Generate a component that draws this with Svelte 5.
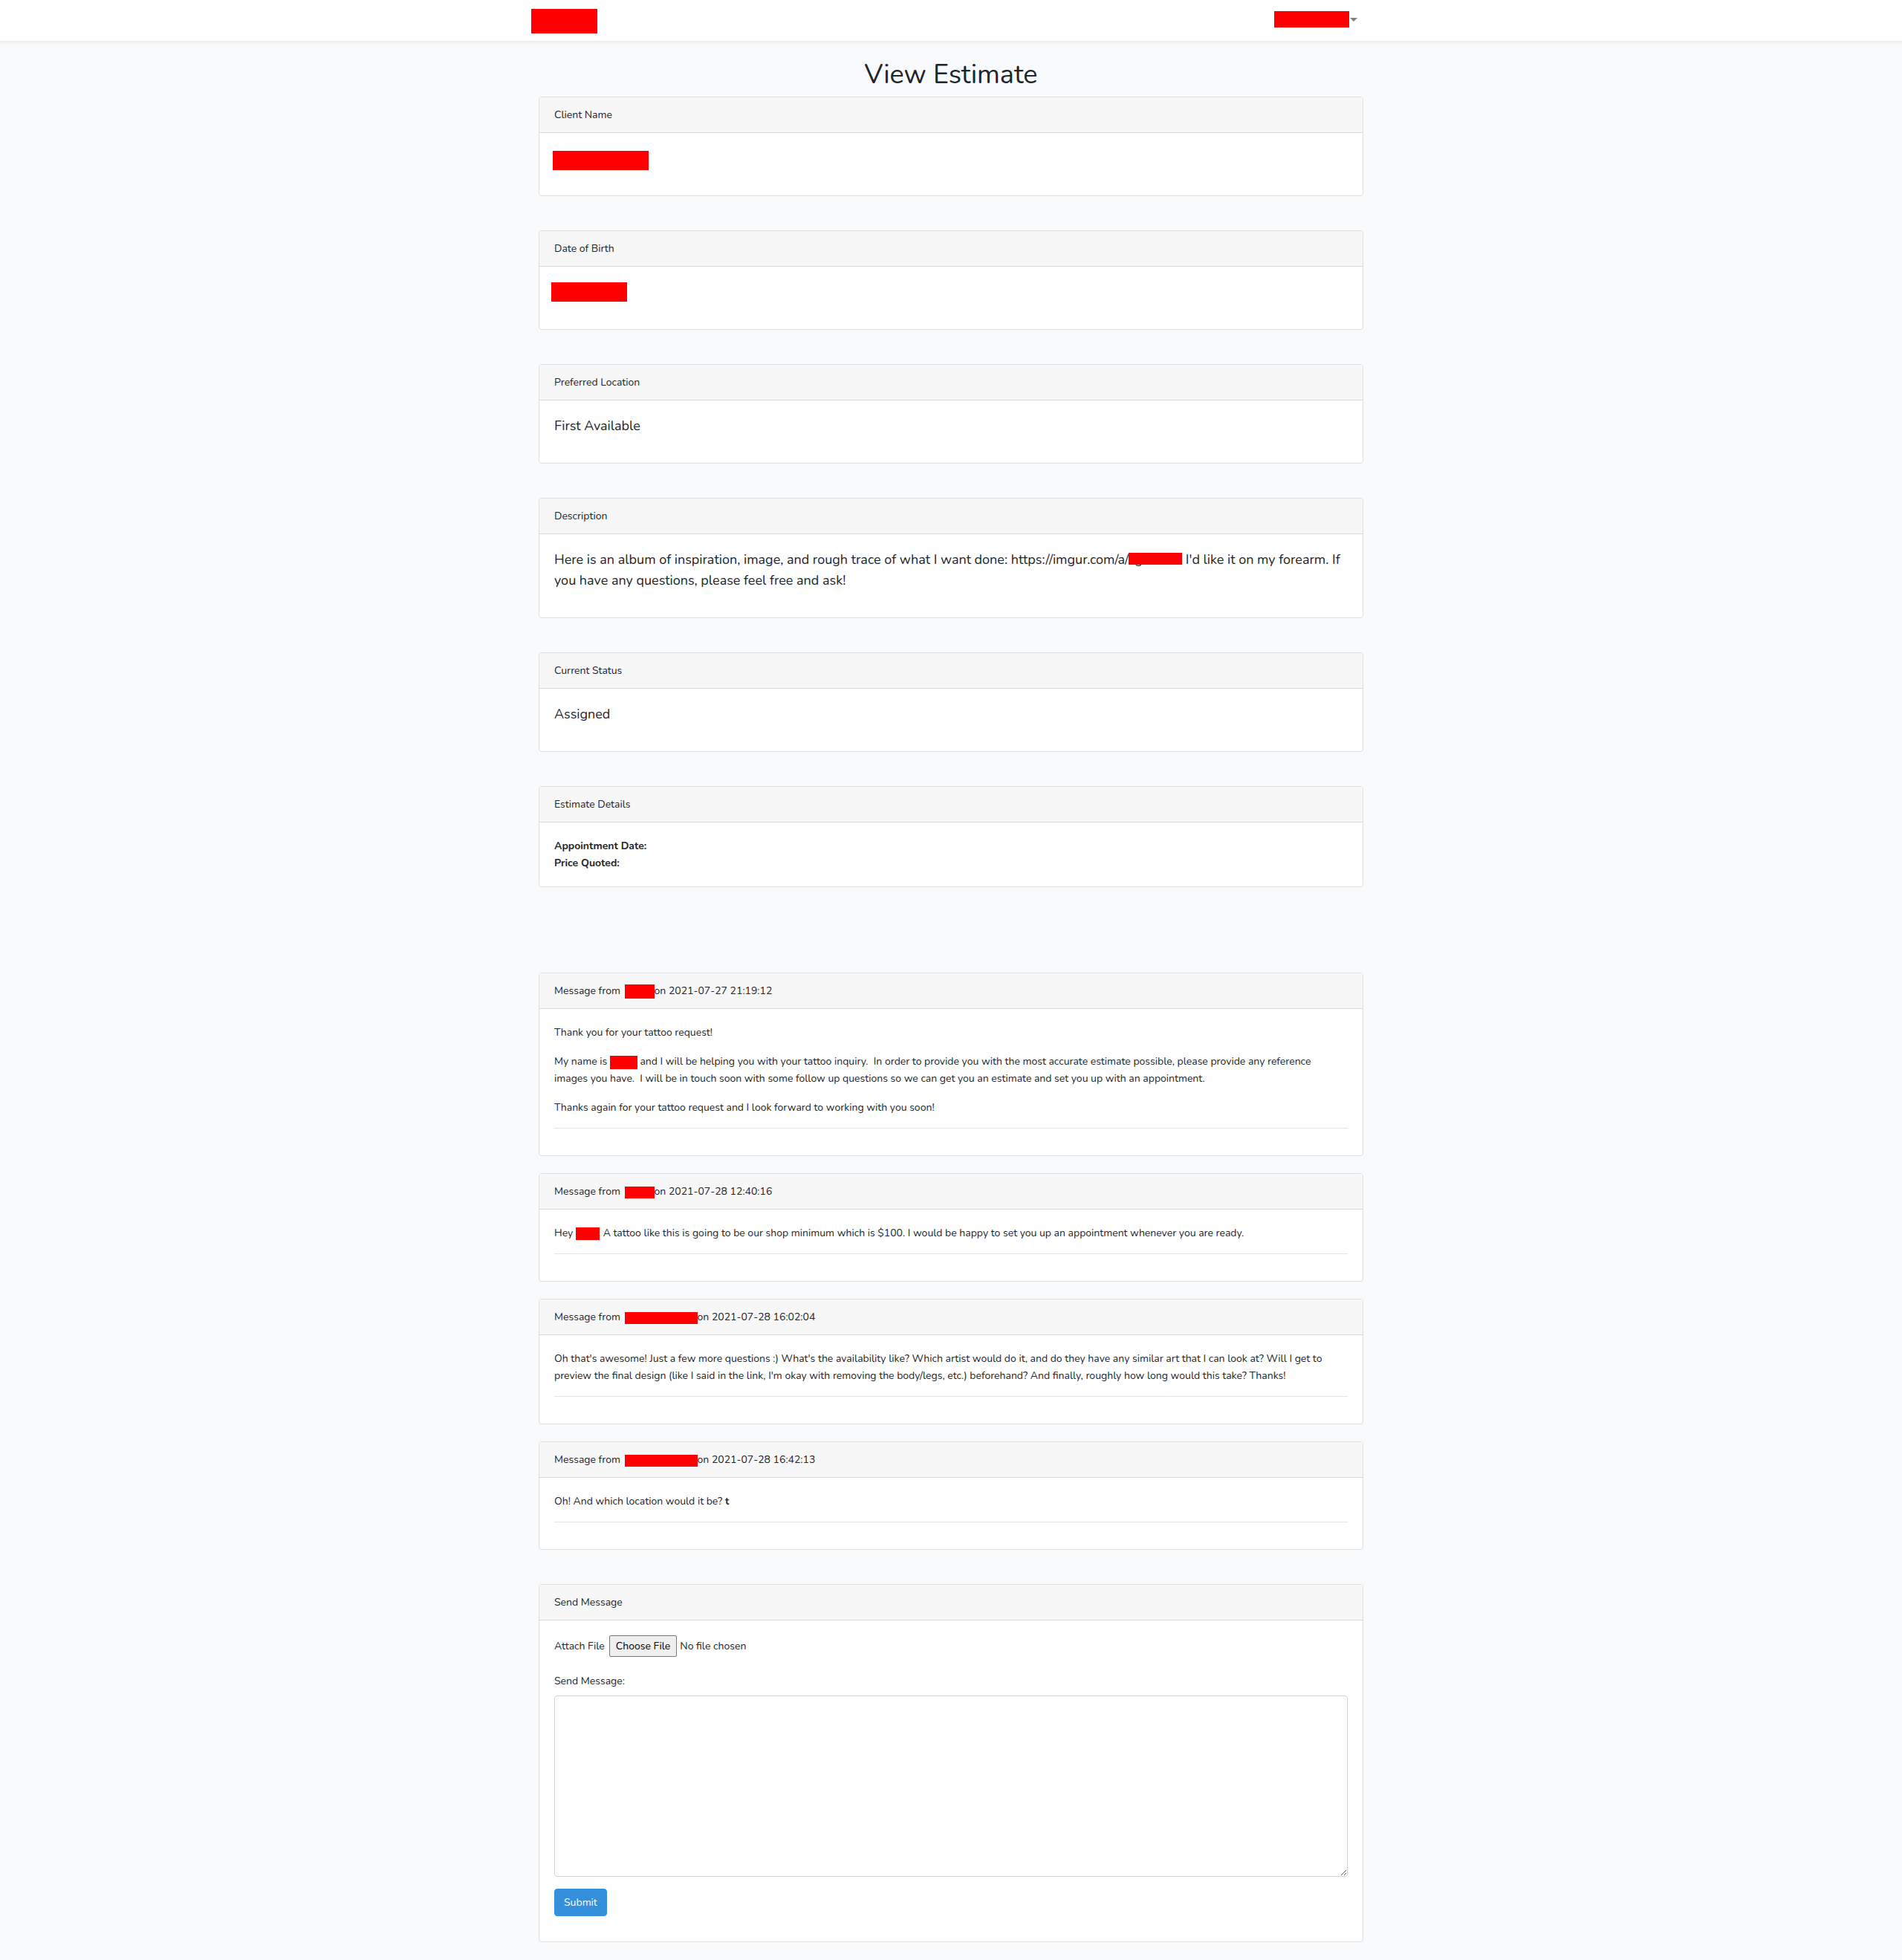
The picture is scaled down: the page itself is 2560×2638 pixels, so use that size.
<script>
  const messages = [
    { size: 'short tall', date: '2021-07-27 21:19:12', body: first },
    { size: 'short', date: '2021-07-28 12:40:16', body: second },
    { size: 'long', date: '2021-07-28 16:02:04', body: third },
    { size: 'long', date: '2021-07-28 16:42:13', body: fourth },
  ];
</script>

{#snippet first()}
  <p>Thank you for your tattoo request!</p>
  <p>
    My name is <span class="redacted name"></span> and I will be helping you with your tattoo inquiry.&nbsp; In order
    to provide you with the most accurate estimate possible, please provide any reference images you have.&nbsp; I will
    be in touch soon with some follow up questions so we can get you an estimate and set you up with an appointment.
  </p>
  <p>Thanks again for your tattoo request and I look forward to working with you soon!</p>
{/snippet}

{#snippet second()}
  <p>
    Hey <span class="redacted client"></span>. A tattoo like this is going to be our shop minimum which is $100. I
    would be happy to set you up an appointment whenever you are ready.
  </p>
{/snippet}

{#snippet third()}
  <p>
    Oh that's awesome! Just a few more questions :) What's the availability like? Which artist would do it, and do they
    have any similar art that I can look at? Will I get to preview the final design (like I said in the link, I'm okay
    with removing the body/legs, etc.) beforehand? And finally, roughly how long would this take? Thanks!
  </p>
{/snippet}

{#snippet fourth()}
  <p>Oh! And which location would it be? <b>t</b></p>
{/snippet}

{#snippet clientName()}
  <p class="hidden-value"><span class="redacted full-name"></span></p>
{/snippet}

{#snippet birthDate()}
  <p class="hidden-value"><span class="redacted birth"></span></p>
{/snippet}

{#snippet location()}
  <p>First Available</p>
{/snippet}

{#snippet description()}
  <p>
    Here is an album of inspiration, image, and rough trace of what I want done: https://imgur.com/a/<span
      class="album">g</span
    > I'd like it on my forearm. If you have any questions, please feel free and ask!
  </p>
{/snippet}

{#snippet status()}
  <p>Assigned</p>
{/snippet}

{#snippet field(title, body)}
  <section class="card">
    <h2 class="card-header">{title}</h2>
    <div class="card-body lead">{@render body()}</div>
  </section>
{/snippet}

<nav class="navbar">
  <div class="container nav-row">
    <a class="brand" href="/" aria-label="Home"></a>
    <button class="user" type="button" aria-label="Account menu">
      <span class="user-name"></span>
      <span class="caret"></span>
    </button>
  </div>
</nav>

<main class="container page">
  <h1>View Estimate</h1>

  <div class="fields">
    {@render field('Client Name', clientName)}
    {@render field('Date of Birth', birthDate)}
    {@render field('Preferred Location', location)}
    {@render field('Description', description)}
    {@render field('Current Status', status)}
    <section class="card">
      <h2 class="card-header">Estimate Details</h2>
      <div class="card-body">
        <div><b>Appointment Date:</b></div>
        <div><b>Price Quoted:</b></div>
      </div>
    </section>
  </div>

  <div class="messages">
    {#each messages as message}
      <article class="card">
        <h2 class="card-header">
          Message from <span class="redacted sender {message.size}"></span>on {message.date}
        </h2>
        <div class="card-body">
          <div class="message-text">{@render message.body()}</div>
          <hr />
        </div>
      </article>
    {/each}
  </div>

  <section class="card">
    <h2 class="card-header">Send Message</h2>
    <form class="card-body" onsubmit={(event) => event.preventDefault()}>
      <div class="file-row">
        <label for="attachment">Attach File</label>
        <input id="attachment" type="file" />
      </div>
      <label class="message-label" for="message">Send Message:</label>
      <textarea id="message"></textarea>
      <button class="submit" type="submit">Submit</button>
    </form>
  </section>
</main>

<style>
  :global(body) {
    margin: 0;
    background: #f8fafc;
    color: #212529;
    font-family: Nunito, Lato, sans-serif;
    font-size: 14px;
    line-height: 23px;
  }

  .container {
    box-sizing: border-box;
    max-width: 1140px;
    margin: 0 auto;
    padding: 0 15px;
  }

  .navbar {
    box-sizing: border-box;
    height: 55px;
    padding-top: 12px;
    background: #fff;
    box-shadow: 0 2px 4px rgba(0, 0, 0, 0.075);
  }

  .nav-row {
    display: flex;
    justify-content: space-between;
    align-items: flex-start;
  }

  .brand {
    width: 89px;
    height: 33px;
    margin-left: -10px;
    background: #f00;
  }

  .user {
    display: flex;
    align-items: center;
    gap: 1px;
    margin: 3px 8px 0 0;
    padding: 0;
    border: 0;
    background: none;
  }

  .user-name {
    width: 101px;
    height: 22px;
    background: #f00;
  }

  .caret {
    border-top: 5px solid #7f7f7f;
    border-right: 5px solid transparent;
    border-left: 5px solid transparent;
  }

  .page {
    padding-top: 24px;
    padding-bottom: 24px;
  }

  h1 {
    margin: 0 0 8px;
    font-size: 36px;
    font-weight: 400;
    line-height: 43px;
    text-align: center;
  }

  .fields {
    display: grid;
    gap: 46px;
    margin-bottom: 115px;
  }

  .messages {
    display: grid;
    gap: 23px;
    margin-bottom: 46px;
  }

  .card {
    border: 1px solid #dddfe0;
    border-radius: 4px;
    background: #fff;
  }

  .card-header {
    margin: 0;
    padding: 12px 20px;
    border-bottom: 1px solid #d8d8d8;
    border-radius: 3px 3px 0 0;
    background: #f7f7f7;
    font-size: 14px;
    font-weight: 400;
  }

  .card-body {
    padding: 20px;
  }

  .lead {
    font-size: 18px;
    line-height: 28px;
  }

  p {
    margin: 0 0 16px;
  }

  .message-text {
    padding-right: 20px;
  }

  hr {
    margin: 16px 0;
    border: 0;
    border-top: 1px solid #e5e5e5;
  }

  .redacted {
    display: inline-block;
    background: #f00;
    vertical-align: middle;
  }

  .hidden-value {
    display: flex;
    align-items: flex-start;
    height: 28px;
  }

  .full-name {
    width: 129px;
    height: 26px;
    margin: 4px 0 0 -2px;
  }

  .birth {
    width: 102px;
    height: 26px;
    margin: 1px 0 0 -4px;
  }

  .sender {
    height: 16px;
    margin-left: 2px;
  }

  .short {
    width: 40px;
  }

  .long {
    width: 98px;
  }

  .tall {
    height: 19px;
  }

  .name {
    width: 37px;
    height: 18px;
  }

  .client {
    position: relative;
    width: 32px;
    height: 17px;
    margin-right: -2px;
  }

  .album {
    position: relative;
    display: inline-block;
    box-sizing: border-box;
    width: 72px;
    padding-left: 8px;
  }

  .album::after {
    content: '';
    position: absolute;
    top: 5px;
    left: 0;
    width: 100%;
    height: 16px;
    background: #f00;
  }

  .file-row {
    display: flex;
    align-items: center;
    gap: 6px;
    margin-bottom: 21px;
  }

  .file-row input {
    flex: 1;
    color: inherit;
    font: inherit;
  }

  .file-row input::file-selector-button {
    box-sizing: border-box;
    height: 29px;
    padding: 1px 8px;
    border: 1px solid #767676;
    border-radius: 2px;
    background: #efefef;
    color: #000;
    font: inherit;
  }

  .message-label {
    display: block;
    margin-bottom: 8px;
  }

  textarea {
    display: block;
    box-sizing: border-box;
    width: 100%;
    height: 244px;
    padding: 6px 12px;
    border: 1px solid #ced4da;
    border-radius: 4px;
    background: #fff;
    color: #495057;
    font: inherit;
  }

  .submit {
    display: block;
    margin: 16px 0 14px;
    padding: 6px 12px;
    border: 1px solid #3490dc;
    border-radius: 4px;
    background: #3490dc;
    color: #fff;
    font: inherit;
  }
</style>
